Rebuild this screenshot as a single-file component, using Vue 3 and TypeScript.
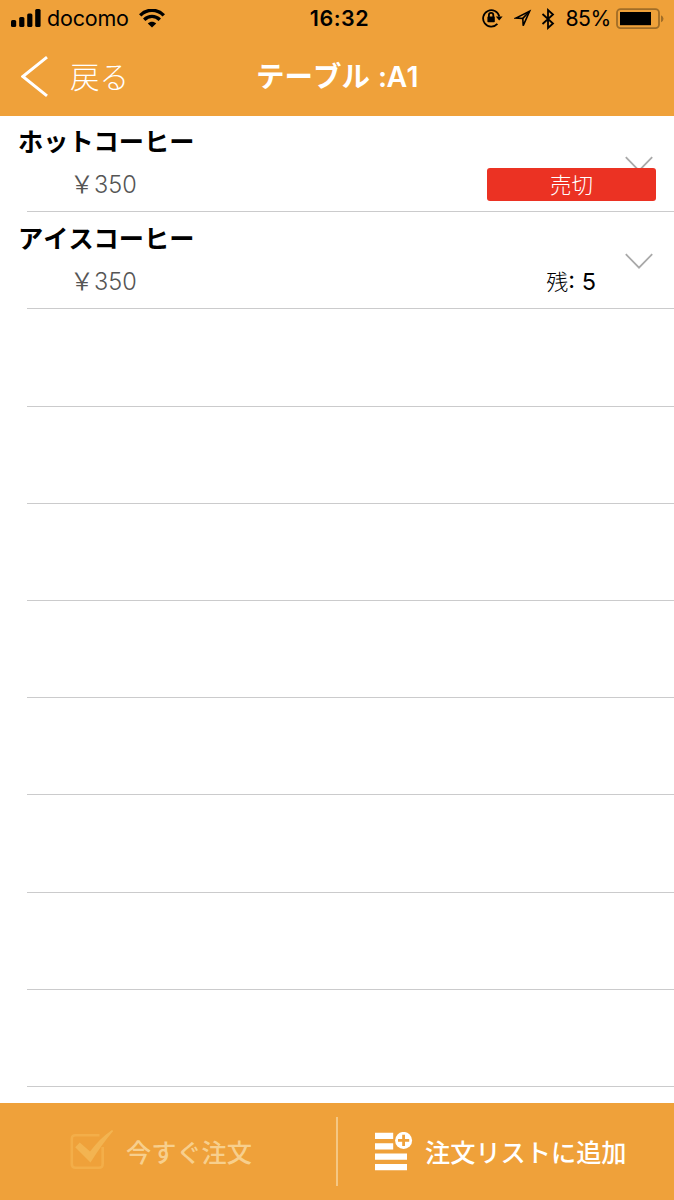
<script setup lang="ts">
interface MenuItem {
  name: string
  price: number
  soldOut?: boolean
  remaining?: number
}

const items: MenuItem[] = [
  { name: 'ホットコーヒー', price: 350, soldOut: true },
  { name: 'アイスコーヒー', price: 350, remaining: 5 },
]
const emptyRows = 8
</script>

<template>
  <div class="screen">
    <header class="top">
      <div class="status">
        <div class="status-left">
          <svg class="signal" width="31" height="19" viewBox="0 0 31 19">
            <rect x="0" y="11" width="5.2" height="7" rx="1.5" />
            <rect x="8.2" y="8" width="5.2" height="10" rx="1.5" />
            <rect x="16.2" y="4.5" width="5.2" height="13.5" rx="1.5" />
            <rect x="24.2" y="0" width="5.4" height="18" rx="1.5" />
          </svg>
          <span class="carrier">docomo</span>
          <svg class="wifi" width="26" height="19" viewBox="0 0 26 19">
            <path d="M1.2 6.4C7.8-.4 18.2-.4 24.8 6.4" />
            <path d="M5.2 10.7C9.8 6.3 16.2 6.3 20.8 10.7" />
            <path class="dot" d="M8.8 14.4C11.3 12.1 14.7 12.1 17.2 14.4L13 18.4Z" />
          </svg>
        </div>
        <span class="clock">16:32</span>
        <div class="status-right">
          <svg class="lock" width="21" height="20" viewBox="0 0 21 20">
            <path class="ring" d="M15.4 15.9A8.2 8.2 0 1 1 17.3 8.5" />
            <path d="M13.8 8.4H20.6L17.2 12.6Z" />
            <rect x="5.4" y="8.4" width="7.4" height="5.8" rx=".7" />
            <path class="shackle" d="M6.9 9V7A2.2 2.2 0 0 1 11.3 7V9" />
          </svg>
          <svg class="arrow" width="18" height="19" viewBox="0 0 18 19">
            <path d="M1.8 9.1L15.6 2.2L9.2 16.6L8.8 9.4Z" />
            <path d="M8.8 9.4L15.6 2.2" />
          </svg>
          <svg class="bluetooth" width="14" height="22" viewBox="0 0 14 22">
            <path d="M1.5 6L12 15.5L7 20V2L12 6.5L1.5 16" />
          </svg>
          <span class="percent">85%</span>
          <svg class="battery" width="48" height="22" viewBox="0 0 48 22">
            <rect class="case" x="1" y="1.2" width="42" height="19" rx="3.6" />
            <rect x="4" y="4" width="31" height="13.2" />
            <path class="tip" d="M45 7.2Q47.5 8.2 47.5 10.7T45 14.2Z" />
          </svg>
        </div>
      </div>
      <nav class="nav">
        <button class="back">
          <svg width="28" height="42" viewBox="0 0 28 42">
            <path d="M26 1.2L1.8 20.5L26 39.8" />
          </svg>
          <span>戻る</span>
        </button>
        <h1 class="title"><span class="title-kana">テーブル</span><span class="title-code">:A1</span></h1>
      </nav>
    </header>

    <main class="list">
      <section v-for="item in items" :key="item.name" class="row">
        <div class="name">{{ item.name }}</div>
        <div class="detail">
          <span class="price"><span class="yen">￥</span>{{ item.price }}</span>
          <span v-if="item.remaining" class="stock"><span class="stock-label">残</span>: {{ item.remaining }}</span>
        </div>
        <svg class="chevron" width="28" height="17" viewBox="0 0 28 17">
          <path d="M.8 1.2L14 14.6L27.2 1.2" />
        </svg>
        <span v-if="item.soldOut" class="sold">売切</span>
      </section>
      <section v-for="n in emptyRows" :key="n" class="row" />
    </main>

    <footer class="actions">
      <button class="action now" disabled>
        <svg width="44" height="42" viewBox="0 0 44 42">
          <path class="box" d="M29.5 6.2H5.5Q1.8 6.2 1.8 10V35Q1.8 38.8 5.5 38.8H29Q32.7 38.8 32.7 35V18" />
          <path class="tick" d="M5.2 18.3L9.8 13.5L20 22.5Q29.5 9.5 42 .9L43.2 1.9Q31.5 15.5 20.5 33.6Z" />
        </svg>
        <span>今すぐ注文</span>
      </button>
      <i class="divider" />
      <button class="action add">
        <svg width="38" height="39" viewBox="0 0 38 39">
          <path d="M0 .8H18.2V7H0ZM0 11.2H18.2V17.4H0ZM0 21.5H32V27.8H0ZM0 32H32V38.3H0Z" />
          <circle cx="28.6" cy="8.4" r="8.5" />
          <path class="plus" d="M28.6 2.8V14M23 8.4H34.2" />
        </svg>
        <span>注文リストに追加</span>
      </button>
    </footer>
  </div>
</template>

<style>
body {
  background: #fff;
}
</style>

<style scoped>
.screen {
  display: flex;
  flex-direction: column;
  width: 674px;
  height: 1200px;
  overflow: hidden;
  background: #fff;
  color: #000;
  font-family: Inter, "Noto Sans CJK JP", sans-serif;
  font-kerning: none;
}

svg {
  display: block;
  flex: none;
}

button {
  padding: 0;
  border: 0;
  background: none;
  font: inherit;
  font-kerning: none;
  color: inherit;
}

.top {
  flex: none;
  height: 116px;
  background: #efa13a;
}

.status {
  display: grid;
  grid-template-columns: 1fr auto 1fr;
  align-items: center;
  height: 37px;
  padding: 0 10px 0 11px;
  font-size: 21.5px;
  line-height: 37px;
}

.status-left,
.status-right {
  display: flex;
  align-items: center;
}

.status-right {
  justify-content: flex-end;
}

.carrier {
  width: 81px;
  margin-left: 5px;
  letter-spacing: -0.2px;
}

.wifi {
  margin-left: 11px;
}

.wifi path {
  fill: none;
  stroke: #000;
  stroke-width: 3.4;
}

.wifi .dot {
  fill: #000;
  stroke: none;
}

.clock {
  padding-left: 4px;
  font-size: 21.5px;
  font-weight: 600;
  letter-spacing: 0.5px;
}

.lock {
  margin-bottom: 1px;
}

.lock .ring,
.lock .shackle {
  fill: none;
  stroke: #000;
  stroke-width: 1.8;
}

.arrow {
  margin-left: 11px;
}

.arrow path {
  fill: none;
  stroke: #000;
  stroke-width: 1.6;
}

.bluetooth {
  margin-left: 9px;
}

.bluetooth path {
  fill: none;
  stroke: #000;
  stroke-width: 1.8;
}

.percent {
  margin-left: 10px;
  font-size: 21.2px;
  letter-spacing: -0.4px;
}

.battery {
  margin-left: 5px;
}

.battery .case {
  fill: none;
  stroke: #a16d27;
  stroke-width: 1.8;
}

.battery .tip {
  fill: #a16d27;
}

.nav {
  display: grid;
  grid-template-columns: 1fr auto 1fr;
  align-items: center;
  height: 79px;
  color: #fff;
}

.back {
  display: flex;
  align-items: center;
  gap: 21px;
  padding-left: 21px;
  font-size: 29.5px;
  font-weight: 300;
  line-height: 40px;
}

.back path {
  fill: none;
  stroke: #fff;
  stroke-width: 3;
}

.title {
  display: flex;
  gap: 8px;
  margin: 0;
  font-size: 28.5px;
  font-weight: 600;
  line-height: 40px;
}

.title-code {
  letter-spacing: -0.6px;
}

.list {
  flex: 1;
  min-height: 0;
}

.row {
  position: relative;
  box-sizing: border-box;
  height: 97.2px;
  padding-left: 18px;
}

.row:first-child {
  height: 96.3px;
}

.row:first-child .name {
  padding-top: 6px;
}

.row::after {
  content: "";
  position: absolute;
  right: 0;
  bottom: 0;
  left: 27px;
  height: 1px;
  background: #cbcbcc;
}

.name {
  padding-top: 7px;
  font-family: "Noto Sans CJK JP", sans-serif;
  font-size: 25.2px;
  font-weight: 700;
  line-height: 36px;
}

.detail {
  display: flex;
  justify-content: space-between;
  margin: 9px 78px 0 52px;
  font-size: 23.5px;
  line-height: 36px;
}

.price {
  display: flex;
  color: #555;
  font-weight: 350;
}

.yen {
  width: 24px;
  font-size: 24px;
}

.stock {
  font-weight: 400;
}

.stock-label {
  font-size: 22px;
  font-weight: 300;
}

.chevron {
  position: absolute;
  top: 41px;
  right: 21px;
}

.row:first-child .chevron {
  top: 40px;
}

.chevron path {
  fill: none;
  stroke: #a9a9a9;
  stroke-width: 1.8;
}

.sold {
  position: absolute;
  top: 52px;
  right: 18px;
  width: 169px;
  height: 33px;
  border-radius: 3px;
  background: #eb3223;
  color: #fff;
  font-size: 21.5px;
  font-weight: 300;
  line-height: 34px;
  text-align: center;
}

.actions {
  display: flex;
  flex: none;
  height: 97px;
  background: #efa13a;
  color: #fff;
  font-size: 25.2px;
  font-weight: 500;
}

.action {
  display: flex;
  align-items: center;
  line-height: 36px;
}

.action span {
  padding-top: 3px;
}

.now {
  width: 336px;
  padding-left: 70px;
  gap: 12px;
  color: #f7cf8d;
}

.now svg {
  margin-bottom: 3px;
}

.now .box {
  fill: none;
  stroke: #f3ae49;
  stroke-width: 2.6;
}

.now .tick {
  fill: #f3b451;
}

.divider {
  width: 2px;
  height: 69px;
  margin-top: 14px;
  background: #f5c783;
}

.add {
  padding-left: 37px;
  gap: 12px;
}

.add svg {
  fill: #fff;
}

.add .plus {
  stroke: #efa13a;
  stroke-width: 2.8;
}
</style>
